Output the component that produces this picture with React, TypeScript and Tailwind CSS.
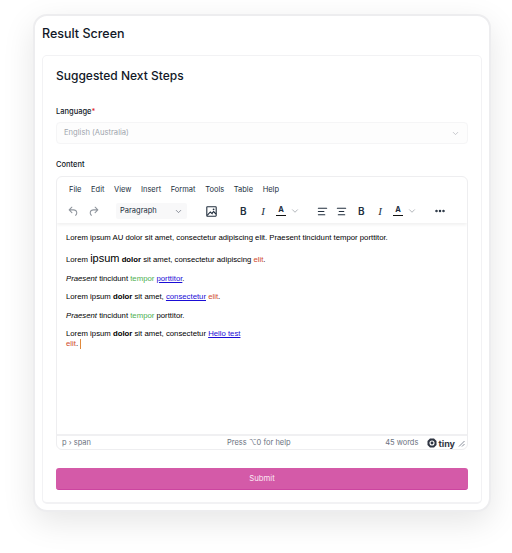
import { ChevronDown, AlignLeft, AlignCenter, MoreHorizontal } from "lucide-react";

const MENU = ["File", "Edit", "View", "Insert", "Format", "Tools", "Table", "Help"];

function UndoIcon({ flip }: { flip?: boolean }) {
  return (
    <svg width="13" height="13" viewBox="0 0 24 24" fill="#8f959d" className={flip ? "-scale-x-100" : ""}>
      <path d="M6.4 8H12c3.7 0 6.2 2 6.8 5.1.6 2.7-.4 5.6-2.3 6.8a1 1 0 0 1-1-1.8c1.1-.7 1.8-2.7 1.4-4.6-.5-2.1-2.1-3.5-4.9-3.5H6.4l3.3 3.3a1 1 0 1 1-1.4 1.4l-5-5a1 1 0 0 1 0-1.4l5-5a1 1 0 0 1 1.4 1.4L6.4 8Z" />
    </svg>
  );
}

function TextColor() {
  return (
    <div className="flex items-center gap-[4px]">
      <div className="flex flex-col items-center w-[10px]">
        <span className="text-[7.5px] leading-[8px] font-bold text-[#222f3e]">A</span>
        <span className="w-[10px] h-[1.5px] bg-[#111] mt-[1px]" />
      </div>
      <ChevronDown size={10} className="text-[#a3a8ae]" />
    </div>
  );
}

function ImageIcon() {
  return (
    <svg width="11" height="11" viewBox="0 0 11 11" fill="none" stroke="#222f3e" strokeWidth="1.1">
      <rect x="0.8" y="0.8" width="9.4" height="9.4" rx="0.6" />
      <path d="M1.2 9.4 L4.3 6 L6.6 8.2 M5.8 7.4 L7.6 5.6 L10 8" />
      <circle cx="7.6" cy="3.3" r="0.9" fill="#222f3e" stroke="none" />
    </svg>
  );
}

export default function App() {
  return (
    <div className="w-[512px] h-[553px] bg-white pt-[14px] pl-[33px] overflow-hidden text-[#111827]" style={{ fontFamily: "Inter, sans-serif" }}>
      <div className="w-[458px] h-[498px] bg-white rounded-[14px] border-2 border-[#ededef] shadow-[0_10px_32px_rgba(0,0,0,0.1)] px-[7px] pb-[6px] flex flex-col">
        <div className="h-[39px] flex items-center text-[12.5px] font-medium pb-[2px]">Result Screen</div>
        <div className="flex-1 border border-[#f2f2f4] rounded-[5px] px-[13px] flex flex-col border-b-2">
          <div className="text-[12px] font-medium mt-[12px] h-[16px] leading-[16px]">Suggested Next Steps</div>

          <div className="text-[7.5px] font-medium mt-[22px] h-[12px] leading-[12px]">
            Language<span className="text-[#dc2626]">*</span>
          </div>
          <div className="mt-[4px] h-[22px] rounded-[4px] border border-[#f5f5f6] bg-[#fdfdfd] flex items-center justify-between pl-[7px] pr-[7px]">
            <span className="text-[7.6px] text-[#a0a5ad]">English (Australia)</span>
            <ChevronDown size={9} className="text-[#b5b8bd]" />
          </div>

          <div className="text-[7.5px] font-medium mt-[15px] h-[12px] leading-[12px]">Content</div>

          <div className="mt-[5px] h-[274px] rounded-[6px] border border-[#eeeef0] flex flex-col overflow-hidden">
            <div className="h-[22px] flex items-center gap-[9.6px] px-[12px] pt-[3px] text-[7.5px] text-[#222f3e] shrink-0">
              {MENU.map((m) => (
                <span key={m}>{m}</span>
              ))}
            </div>
            <div className="h-[24px] flex items-center pl-[10px] shrink-0 shadow-[0_2px_3px_rgba(0,0,0,0.06)] relative text-[#222f3e]">
              <UndoIcon />
              <span className="ml-[7px]"><UndoIcon flip /></span>
              <div className="ml-[16px] w-[71px] h-[16px] bg-[#f8f8f9] rounded-[2px] flex items-center justify-between px-[4px]">
                <span className="text-[7.5px]">Paragraph</span>
                <ChevronDown size={9} className="text-[#6b7280]" />
              </div>
              <div className="ml-[19px]"><ImageIcon /></div>
              <span className="ml-[23px] text-[10px] font-semibold w-[9px]">B</span>
              <span className="ml-[10px] text-[11px] italic w-[8px] text-center" style={{ fontFamily: "'Liberation Serif', serif" }}>I</span>
              <div className="ml-[9px]"><TextColor /></div>
              <AlignLeft size={11} strokeWidth={2.4} className="ml-[17px]" />
              <AlignCenter size={11} strokeWidth={2.4} className="ml-[8px]" />
              <span className="ml-[11px] text-[10px] font-semibold w-[9px]">B</span>
              <span className="ml-[9px] text-[11px] italic w-[8px] text-center" style={{ fontFamily: "'Liberation Serif', serif" }}>I</span>
              <div className="ml-[9px]"><TextColor /></div>
              <MoreHorizontal size={12} strokeWidth={3} className="ml-[17px]" />
            </div>

            <div className="flex-1 pl-[9px] pt-[10px] text-[7.75px] leading-[10px] text-black" style={{ fontFamily: "'Liberation Sans', Arial, sans-serif" }}>
              <p>Lorem ipsum AU dolor sit amet, consectetur adipiscing elit. Praesent tincidunt tempor porttitor.</p>
              <p className="mt-[10px]">
                Lorem <span className="text-[11px]">ipsum</span> <b>dolor</b> sit amet, consectetur adipiscing <span className="text-[#cf4a2c]">elit</span>.
              </p>
              <p className="mt-[9px]">
                <i>Praesent</i> tincidunt <span className="text-[#4caf50]">tempor</span> <a className="text-[#1a0dd6] underline">porttitor</a>.
              </p>
              <p className="mt-[8px]">
                Lorem ipsum <b>dolor</b> sit amet, <a className="text-[#1a0dd6] underline">consectetur</a> <span className="text-[#cf4a2c]">elit</span>.
              </p>
              <p className="mt-[9px]">
                <i>Praesent</i> tincidunt <span className="text-[#4caf50]">tempor</span> porttitor.
              </p>
              <p className="mt-[8px] w-[178px]">
                Lorem ipsum <b>dolor</b> sit amet, consectetur <a className="text-[#1a0dd6] underline">Hello test</a>{" "}
                <span className="text-[#cf4a2c]">elit</span>.<span className="inline-block w-px h-[10px] bg-[#e08a3c] ml-[2px] align-middle" />
              </p>
            </div>

            <div className="h-[15px] border-t-2 border-[#f0f0f2] flex items-center pl-[5px] pr-[2px] pt-[1px] text-[7.5px] text-[#6b7280] shrink-0 relative">
              <span>p › span</span>
              <span className="absolute left-[170px]">Press ⌥0 for help</span>
              <span className="ml-auto">45 words</span>
              <span className="ml-[9px] flex items-center gap-[1px] text-[#2f3542] font-bold text-[9px] leading-none">
                <svg width="10" height="10" viewBox="0 0 10 10" fill="none">
                  <path d="M3 .5h4L9.5 3v4L7 9.5H3L.5 7V3Z" fill="#2f3542" />
                  <circle cx="5" cy="5" r="2" stroke="#fff" strokeWidth="1.1" />
                </svg>
                tiny
              </span>
              <svg width="7" height="7" viewBox="0 0 7 7" className="ml-[3px]" stroke="#6b7280" strokeWidth="0.8">
                <path d="M1 6.5 L6.5 1 M4 6.5 L6.5 4" />
              </svg>
            </div>
          </div>

          <button className="mt-[18px] h-[22px] shrink-0 rounded-[3px] bg-[#d45aa8] border-b border-[#cc45a0] text-[#fbe6f3] text-[7.75px] font-normal">Submit</button>
        </div>
      </div>
    </div>
  );
}
